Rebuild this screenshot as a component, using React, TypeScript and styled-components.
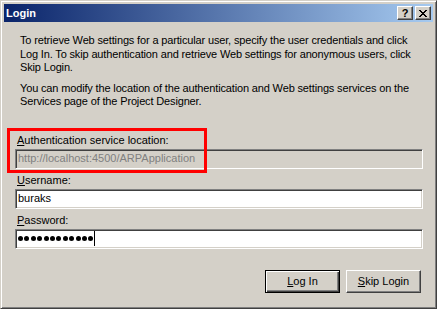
import React from "react";
import styled, { createGlobalStyle } from "styled-components";

const Global = createGlobalStyle`
  html, body { margin: 0; padding: 0; background: #d4d0c8; }
  body { font-family: "Liberation Sans", Arial, sans-serif; font-size: 11px; color: #000; }
`;

const Window = styled.div`
  position: relative;
  box-sizing: border-box;
  width: 437px;
  height: 309px;
  background: #d4d0c8;
  border: 1px solid;
  border-color: #d4d0c8 #404040 #404040 #d4d0c8;
  box-shadow: inset 1px 1px #ffffff, inset -1px -1px #808080;
  padding: 3px;
  display: flex;
  flex-direction: column;
`;

const TitleBar = styled.div`
  height: 18px;
  background: linear-gradient(to right, #0a246a, #a6caf0);
  display: flex;
  align-items: center;
  padding: 0 2px 0 2px;
`;

const Title = styled.span`
  flex: 1;
  color: #fff;
  font-weight: bold;
  font-size: 11px;
  line-height: 18px;
`;

const CapButton = styled.div<{ $gap?: number }>`
  box-sizing: border-box;
  width: 16px;
  height: 14px;
  margin-left: ${(p) => p.$gap ?? 0}px;
  background: #d4d0c8;
  border: 1px solid;
  border-color: #ffffff #404040 #404040 #ffffff;
  box-shadow: inset -1px -1px #808080;
  display: flex;
  align-items: center;
  justify-content: center;
  font-weight: bold;
  font-size: 11px;
  line-height: 12px;
  color: #000;
`;

const Body = styled.div`
  position: relative;
  flex: 1;
  display: flex;
  flex-direction: column;
  padding: 12px 10px 0 11px;
`;

const Paragraph = styled.p<{ $top?: number }>`
  margin: ${(p) => p.$top ?? 0}px 0 0 5px;
  line-height: 13.5px;
  letter-spacing: -0.15px;
  white-space: nowrap;
`;

const Label = styled.div<{ $top: number }>`
  margin-top: ${(p) => p.$top}px;
  padding-left: 2px;
  height: 13px;
  line-height: 13px;
`;

const Key = styled.span`
  text-decoration: underline;
`;

const Field = styled.div<{ $disabled?: boolean }>`
  box-sizing: border-box;
  margin-top: 2px;
  height: 20px;
  border: 1px solid;
  border-color: #808080 #ffffff #ffffff #808080;
  box-shadow: inset 1px 1px #404040, inset -1px -1px #d4d0c8;
  background: ${(p) => (p.$disabled ? "#d4d0c8" : "#ffffff")};
  color: ${(p) => (p.$disabled ? "#808080" : "#000000")};
  display: flex;
  align-items: center;
  padding-left: 2px;
  line-height: 13px;
`;

const Dots = styled.span`
  display: flex;
  gap: 1.4px;
`;

const Dot = styled.span`
  width: 5px;
  height: 5px;
  border-radius: 50%;
  background: #000;
`;

const Caret = styled.span`
  width: 1px;
  height: 15px;
  background: #000;
  margin-left: 1px;
`;

const ButtonRow = styled.div`
  margin-top: 21px;
  display: flex;
  justify-content: flex-end;
  gap: 6px;
  padding-right: 2px;
`;

const Button = styled.div<{ $default?: boolean }>`
  box-sizing: border-box;
  width: 75px;
  height: 23px;
  background: #d4d0c8;
  display: flex;
  align-items: center;
  justify-content: center;
  border: 1px solid;
  border-color: ${(p) =>
    p.$default ? "#000000" : "#ffffff #404040 #404040 #ffffff"};
  box-shadow: ${(p) =>
    p.$default
      ? "inset 1px 1px #ffffff, inset -1px -1px #404040, inset -2px -2px #808080"
      : "inset -1px -1px #808080"};
`;

const Highlight = styled.div`
  position: absolute;
  left: 3px;
  top: 106px;
  width: 200px;
  height: 45px;
  box-sizing: border-box;
  border: 3px solid #ff0000;
  pointer-events: none;
`;

export default function App() {
  return (
    <>
      <Global />
      <Window>
        <TitleBar>
          <Title>Login</Title>
          <CapButton>?</CapButton>
          <CapButton $gap={2}>
            <svg width="8" height="7" viewBox="0 0 8 7" shapeRendering="crispEdges">
              <path
                d="M0 0h2v1H0zM6 0h2v1H6zM1 1h2v1H1zM5 1h2v1H5zM2 2h4v1H2zM3 3h2v1H3zM2 4h4v1H2zM1 5h2v1H1zM5 5h2v1H5zM0 6h2v1H0zM6 6h2v1H6z"
                fill="#000"
              />
            </svg>
          </CapButton>
        </TitleBar>
        <Body>
          <Paragraph>
            To retrieve Web settings for a particular user, specify the user credentials and click
            <br />
            Log In. To skip authentication and retrieve Web settings for anonymous users, click
            <br />
            Skip Login.
          </Paragraph>
          <Paragraph $top={7}>
            You can modify the location of the authentication and Web settings services on the
            <br />
            Services page of the Project Designer.
          </Paragraph>
          <Label $top={25}>
            <Key>A</Key>uthentication service location:
          </Label>
          <Field $disabled>http://localhost:4500/ARPApplication</Field>
          <Label $top={5}>
            <Key>U</Key>sername:
          </Label>
          <Field>buraks</Field>
          <Label $top={5}>
            <Key>P</Key>assword:
          </Label>
          <Field>
            <Dots>
              {Array.from({ length: 12 }).map((_, i) => (
                <Dot key={i} />
              ))}
            </Dots>
            <Caret />
          </Field>
          <ButtonRow>
            <Button $default>
              <span>
                <Key>L</Key>og In
              </span>
            </Button>
            <Button>
              <span>
                <Key>S</Key>kip Login
              </span>
            </Button>
          </ButtonRow>
          <Highlight />
        </Body>
      </Window>
    </>
  );
}
